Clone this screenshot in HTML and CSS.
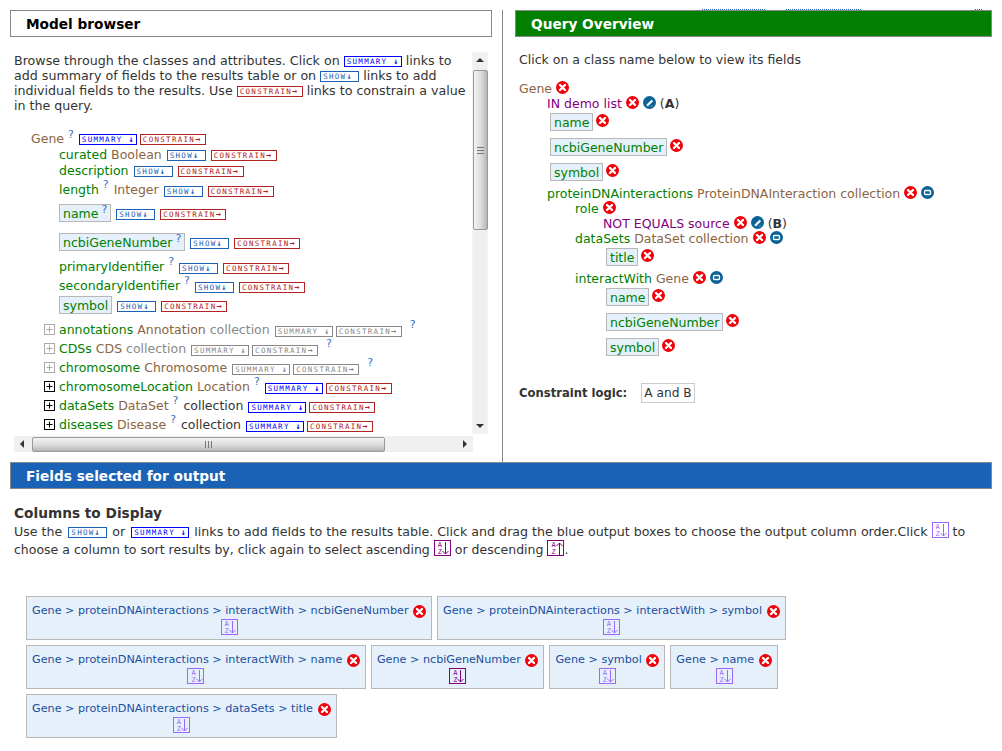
FILE: index.html
```html
<!DOCTYPE html>
<html lang="en-us">
<head>
    <meta charset="utf-8">
    <meta name="viewport" content="width=device-width">
    <title>Query builder</title>
    <link rel="stylesheet" href="styles.css">
</head>
<body>
    <svg class="sprite" width="0" height="0">
        <symbol id="i-x" viewBox="0 0 13 13">
            <circle cx="6.5" cy="6.5" r="6.5" fill="#f00008"/>
            <path d="M4 4l5 5M9 4l-5 5" stroke="#fff" stroke-width="2.4" stroke-linecap="round"/>
        </symbol>
        <symbol id="i-edit" viewBox="0 0 13 13">
            <circle cx="6.5" cy="6.5" r="6.5" fill="#0b6297"/>
            <path d="M4 8.6l4.6-4.6 1.2 1.2-4.6 4.6H4zM7.5 10h1M9.5 10h.6" fill="#fff" stroke="#fff" stroke-width=".6"/>
        </symbol>
        <symbol id="i-min" viewBox="0 0 13 13">
            <circle cx="6.5" cy="6.5" r="6.5" fill="#0b6297"/>
            <rect x="3.5" y="4.5" width="6" height="4" rx="1" fill="none" stroke="#fff" stroke-width="1.3"/>
        </symbol>
        <symbol id="i-plus" viewBox="0 0 11 11">
            <rect x=".5" y=".5" width="10" height="10" fill="#fff" stroke="currentColor"/>
            <path d="M2.5 5.5h6M5.500 2.500v6" stroke="currentColor"/>
        </symbol>
        <symbol id="i-down" viewBox="0 0 7 13">
            <path d="M3.500 0v12M.5 9l3 3 3-3" fill="none" stroke="currentColor"/>
        </symbol>
        <symbol id="i-up" viewBox="0 0 7 13">
            <path d="M3.500 1v12M.5 4l3-3 3 3" fill="none" stroke="currentColor"/>
        </symbol>
    </svg>

    <div class="top-links">
        <span class="top-link link-a"></span>
        <span class="top-link link-b"></span>
        <span class="top-link link-c"></span>
    </div>

    <div class="columns">
        <div class="col-left">
            <h2 class="heading">Model browser</h2>
            <div class="browser">
                <div class="browser-top">
                    <div class="tree-scroll">
                        <p class="intro">Browse through the classes and attributes. Click on <a class="tag summary">SUMMARY <i>↓</i></a> links to<br>add summary of fields to the results table or on <a class="tag show">SHOW<i>↓</i></a> links to add<br>individual fields to the results. Use <a class="tag constrain">CONSTRAIN<i>→</i></a> links to constrain a value<br>in the query.</p>
                        <div class="tree">
                            <div class="row root short"><span class="label"><span class="cls">Gene</span></span><sup class="help">?</sup><a class="tag summary first">SUMMARY <i>↓</i></a><a class="tag constrain near">CONSTRAIN<i>→</i></a></div>

                            <div class="row attr short"><span class="label"><span class="fld">curated</span> <span class="cls">Boolean</span></span><a class="tag show first">SHOW<i>↓</i></a><a class="tag constrain">CONSTRAIN<i>→</i></a></div>
                            <div class="row attr short"><span class="label"><span class="fld">description</span></span><a class="tag show first">SHOW<i>↓</i></a><a class="tag constrain">CONSTRAIN<i>→</i></a></div>
                            <div class="row attr tall length"><span class="label"><span class="fld">length</span></span><sup class="help">?</sup><span class="cls after-help">Integer</span><a class="tag show first">SHOW<i>↓</i></a><a class="tag constrain">CONSTRAIN<i>→</i></a></div>
                            <div class="row attr boxed"><span class="box"><span class="fld">name</span><sup class="help">?</sup></span><a class="tag show first">SHOW<i>↓</i></a><a class="tag constrain">CONSTRAIN<i>→</i></a></div>
                            <div class="row attr boxed"><span class="box"><span class="fld">ncbiGeneNumber</span><sup class="help">?</sup></span><a class="tag show first">SHOW<i>↓</i></a><a class="tag constrain">CONSTRAIN<i>→</i></a></div>
                            <div class="row attr tall"><span class="label"><span class="fld">primaryIdentifier</span></span><sup class="help">?</sup><a class="tag show first">SHOW<i>↓</i></a><a class="tag constrain">CONSTRAIN<i>→</i></a></div>
                            <div class="row attr tall"><span class="label"><span class="fld">secondaryIdentifier</span></span><sup class="help">?</sup><a class="tag show first">SHOW<i>↓</i></a><a class="tag constrain">CONSTRAIN<i>→</i></a></div>
                            <div class="row attr boxed tight"><span class="box"><span class="fld">symbol</span></span><a class="tag show first">SHOW<i>↓</i></a><a class="tag constrain">CONSTRAIN<i>→</i></a></div>

                            <div class="row ref tall off"><svg class="plus"><use href="#i-plus"/></svg><span class="label"><span class="fld">annotations</span> <span class="cls">Annotation</span> <span class="coll">collection</span></span><a class="tag first">SUMMARY <i>↓</i></a><a class="tag wide near">CONSTRAIN<i>→</i></a><sup class="help late">?</sup></div>
                            <div class="row ref tall off"><svg class="plus"><use href="#i-plus"/></svg><span class="label"><span class="fld">CDSs</span> <span class="cls">CDS</span> <span class="coll">collection</span></span><a class="tag first">SUMMARY <i>↓</i></a><a class="tag wide near">CONSTRAIN<i>→</i></a><sup class="help late">?</sup></div>
                            <div class="row ref tall off"><svg class="plus"><use href="#i-plus"/></svg><span class="label"><span class="fld">chromosome</span> <span class="cls">Chromosome</span></span><a class="tag first">SUMMARY <i>↓</i></a><a class="tag wide near">CONSTRAIN<i>→</i></a><sup class="help late">?</sup></div>
                            <div class="row ref tall"><svg class="plus"><use href="#i-plus"/></svg><span class="label"><span class="fld">chromosomeLocation</span> <span class="cls">Location</span></span><sup class="help">?</sup><a class="tag summary first">SUMMARY <i>↓</i></a><a class="tag constrain near">CONSTRAIN<i>→</i></a></div>
                            <div class="row ref tall"><svg class="plus"><use href="#i-plus"/></svg><span class="label"><span class="fld">dataSets</span> <span class="cls">DataSet</span></span><sup class="help">?</sup><span class="after-help">collection</span><a class="tag summary first">SUMMARY <i>↓</i></a><a class="tag constrain near">CONSTRAIN<i>→</i></a></div>
                            <div class="row ref tall"><svg class="plus"><use href="#i-plus"/></svg><span class="label"><span class="fld">diseases</span> <span class="cls">Disease</span></span><sup class="help">?</sup><span class="after-help">collection</span><a class="tag summary first">SUMMARY <i>↓</i></a><a class="tag constrain near">CONSTRAIN<i>→</i></a></div>
                            <div class="row ref tall clipped"><svg class="plus"><use href="#i-plus"/></svg><span class="label"><span class="fld">diseaseAssociations</span> <span class="cls">Association</span></span><span class="after-help">collection</span></div>
                        </div>
                    </div>
                    <div class="vbar">
                        <span class="arrow-up"></span>
                        <div class="vthumb"><span class="grip-h"></span></div>
                        <span class="vspace"></span>
                        <span class="arrow-down"></span>
                    </div>
                </div>
                <div class="hbar">
                    <span class="arrow-left"></span>
                    <div class="hthumb"><span class="grip-v"></span></div>
                    <span class="hspace"></span>
                    <span class="arrow-right"></span>
                </div>
            </div>
        </div>

        <div class="col-right">
            <h2 class="heading green">Query Overview</h2>
            <p class="overview-intro">Click on a class name below to view its fields</p>
            <div class="qrow"><span class="cls">Gene</span><svg class="ico"><use href="#i-x"/></svg></div>
            <div class="qrow in1"><span class="cons">IN demo list</span><svg class="ico"><use href="#i-x"/></svg><svg class="ico"><use href="#i-edit"/></svg><span class="code">(<b>A</b>)</span></div>
            <div class="frow in1b"><span class="fbox">name</span><svg class="ico"><use href="#i-x"/></svg></div>
            <div class="frow in1b"><span class="fbox">ncbiGeneNumber</span><svg class="ico"><use href="#i-x"/></svg></div>
            <div class="frow in1b"><span class="fbox">symbol</span><svg class="ico"><use href="#i-x"/></svg></div>
            <div class="qrow in1"><span class="fld">proteinDNAinteractions</span>&nbsp;<span class="cls">ProteinDNAInteraction collection</span><svg class="ico"><use href="#i-x"/></svg><svg class="ico"><use href="#i-min"/></svg></div>
            <div class="qrow in2"><span class="fld">role</span><svg class="ico"><use href="#i-x"/></svg></div>
            <div class="qrow in3"><span class="cons">NOT EQUALS source</span><svg class="ico"><use href="#i-x"/></svg><svg class="ico"><use href="#i-edit"/></svg><span class="code">(<b>B</b>)</span></div>
            <div class="qrow in2"><span class="fld">dataSets</span>&nbsp;<span class="cls">DataSet collection</span><svg class="ico"><use href="#i-x"/></svg><svg class="ico"><use href="#i-min"/></svg></div>
            <div class="frow in2b"><span class="fbox">title</span><svg class="ico"><use href="#i-x"/></svg></div>
            <div class="qrow in2"><span class="fld">interactWith</span>&nbsp;<span class="cls">Gene</span><svg class="ico"><use href="#i-x"/></svg><svg class="ico"><use href="#i-min"/></svg></div>
            <div class="frow in2b"><span class="fbox">name</span><svg class="ico"><use href="#i-x"/></svg></div>
            <div class="frow in2b"><span class="fbox">ncbiGeneNumber</span><svg class="ico"><use href="#i-x"/></svg></div>
            <div class="frow in2b"><span class="fbox">symbol</span><svg class="ico"><use href="#i-x"/></svg></div>
            <div class="logic"><b>Constraint logic:</b><span class="logic-box">A and B</span></div>
        </div>
    </div>

    <div class="fields">
        <h2 class="heading blue">Fields selected for output</h2>
        <h3 class="columns-title">Columns to Display</h3>
        <p class="columns-help"><span class="help-first">Use the <a class="tag show">SHOW<i>↓</i></a> or <a class="tag summary">SUMMARY <i>↓</i></a> links to add fields to the results table. Click and drag the blue output boxes to choose the output column order.Click <span class="sort light"><span class="az">A<br>Z</span><svg class="sort-arrow"><use href="#i-down"/></svg></span> to</span><br>choose a column to sort results by, click again to select ascending <span class="sort dark"><span class="az">A<br>Z</span><svg class="sort-arrow"><use href="#i-down"/></svg></span> or descending <span class="sort dark"><span class="az">A<br>Z</span><svg class="sort-arrow"><use href="#i-up"/></svg></span>.</p>
        <div class="output-list">
            <div class="output">
                <div class="path">Gene &gt; proteinDNAinteractions &gt; interactWith &gt; ncbiGeneNumber <svg class="ico"><use href="#i-x"/></svg></div>
                <span class="sort light"><span class="az">A<br>Z</span><svg class="sort-arrow"><use href="#i-down"/></svg></span>
            </div>
            <div class="output">
                <div class="path">Gene &gt; proteinDNAinteractions &gt; interactWith &gt; symbol <svg class="ico"><use href="#i-x"/></svg></div>
                <span class="sort light"><span class="az">A<br>Z</span><svg class="sort-arrow"><use href="#i-down"/></svg></span>
            </div>
            <div class="output">
                <div class="path">Gene &gt; proteinDNAinteractions &gt; interactWith &gt; name <svg class="ico"><use href="#i-x"/></svg></div>
                <span class="sort light"><span class="az">A<br>Z</span><svg class="sort-arrow"><use href="#i-down"/></svg></span>
            </div>
            <div class="output">
                <div class="path">Gene &gt; ncbiGeneNumber <svg class="ico"><use href="#i-x"/></svg></div>
                <span class="sort dark"><span class="az">A<br>Z</span><svg class="sort-arrow"><use href="#i-down"/></svg></span>
            </div>
            <div class="output">
                <div class="path">Gene &gt; symbol <svg class="ico"><use href="#i-x"/></svg></div>
                <span class="sort light"><span class="az">A<br>Z</span><svg class="sort-arrow"><use href="#i-down"/></svg></span>
            </div>
            <div class="output">
                <div class="path">Gene &gt; name <svg class="ico"><use href="#i-x"/></svg></div>
                <span class="sort light"><span class="az">A<br>Z</span><svg class="sort-arrow"><use href="#i-down"/></svg></span>
            </div>
            <div class="output">
                <div class="path">Gene &gt; proteinDNAinteractions &gt; dataSets &gt; title <svg class="ico"><use href="#i-x"/></svg></div>
                <span class="sort light"><span class="az">A<br>Z</span><svg class="sort-arrow"><use href="#i-down"/></svg></span>
            </div>
        </div>
    </div>
</body>
</html>
```

FILE: styles.css
```css
* {
    box-sizing: border-box;
}

body {
    margin: 0;
    position: relative;
    height: 751px;
    overflow: hidden;
    background: #fff;
    color: #333;
    font-family: "DejaVu Sans", Verdana, sans-serif;
    font-size: 12.5px;
    line-height: 15px;
}

.sprite {
    position: absolute;
}

/* bits of the nav links poking out above the green bar */
.top-links .top-link {
    position: absolute;
    top: 9px;
    height: 1px;
    border-top: 1px dotted #1a62b5;
}

.link-a { left: 702px; width: 63px; }
.link-b { left: 786px; width: 75px; }
.link-c { left: 975px; width: 7px; }

/* top two columns */
.columns {
    display: flex;
    height: 462px;
    padding-top: 10px;
}

.col-left {
    width: 503px;
    padding: 0 10px;
    border-right: 1px solid #888;
}

.col-right {
    width: 489px;
    padding-left: 12px;
}

.heading {
    height: 27px;
    margin: 0;
    padding-left: 15px;
    border: 1px solid #888;
    font-size: 13.7px;
    line-height: 26px;
    font-weight: bold;
    color: #000;
}

.heading.green {
    background: #007f00;
    color: #fff;
}

.heading.blue {
    background: #1a62b5;
    color: #fff;
}

/* model browser */
.browser {
    margin: 15px 0 0 4px;
    width: 476px;
}

.browser-top {
    display: flex;
}

.tree-scroll {
    width: 460px;
    height: 382px;
    overflow: hidden;
}

.intro {
    margin: 0;
    padding-top: 1px;
    font-size: 12.65px;
    white-space: nowrap;
}

.tree {
    margin-top: 17px;
}

.row {
    display: flex;
    align-items: center;
    white-space: nowrap;
}

.root { padding-left: 17px; }
.attr { padding-left: 45px; }
.ref { padding-left: 30px; }

.short { height: 16px; }
.tall { height: 19px; }
.length { margin-top: 2px; }

.boxed {
    height: 29px;
    padding-top: 5px;
    padding-bottom: 6px;
}

.boxed.tight {
    height: 25px;
    padding-top: 1px;
    padding-bottom: 6px;
}

.clipped {
    margin-top: -4px;
}

.plus {
    width: 11px;
    height: 11px;
    margin-right: 4px;
    color: #000;
    flex: none;
}

.off .plus {
    color: #aaa;
}

.off .coll {
    color: #888;
}

.fld { color: #008000; }
.cls { color: #8b6442; }
.cons { color: #800080; }

.help {
    align-self: flex-start;
    margin: -1px 0 0 4px;
    font-size: 11px;
    line-height: 11px;
    color: #3a72c4;
    vertical-align: baseline;
}

.box .help {
    margin-left: 3px;
}

.help.late {
    margin-left: 8px;
}

.after-help {
    margin-left: 5px;
}

.box {
    display: flex;
    align-items: center;
    height: 18px;
    padding: 0 3px;
    background: #e6f0fa;
    border: 1px solid #b8b8b8;
}

/* small SUMMARY / SHOW / CONSTRAIN links */
.tag {
    display: inline-block;
    width: 58px;
    height: 11px;
    padding-left: 2px;
    border: 1px solid #888;
    color: #888;
    font-family: "DejaVu Sans Mono", monospace;
    font-size: 7.5px;
    line-height: 9px;
    letter-spacing: 1.3px;
    white-space: nowrap;
    flex: none;
}

.tag i {
    font-style: normal;
    font-weight: bold;
    font-size: 8.5px;
    letter-spacing: 0;
}

.row .tag {
    margin-top: 3px;
    margin-left: 5px;
}

.row .tag.near {
    margin-left: 3px;
}

.tag.wide,
.tag.constrain {
    width: 66px;
}

.tag.summary {
    border-color: #00f;
    color: #00f;
}

.tag.show {
    width: 39px;
    border-color: #1a62b5;
    color: #1a62b5;
}

.tag.constrain {
    border-color: #b22222;
    color: #b22222;
}

.intro .tag,
.columns-help .tag {
    vertical-align: 1px;
}

.columns-help .tag {
    margin: 0 1px 0 2px;
}

/* fake scrollbars, the browser's own can't be photographed here */
.vbar {
    display: flex;
    flex-direction: column;
    align-items: center;
    width: 16px;
    height: 382px;
    margin-left: -2px;
    background: #f0f0f0;
    border: 1px solid #f4f4f4;
}

.vthumb {
    display: flex;
    align-items: center;
    justify-content: center;
    width: 15px;
    height: 160px;
    margin-top: 8px;
    background: linear-gradient(to right, #f4f4f4, #d8d8d8 60%, #b4b4b4);
    border: 1px solid #999;
    border-radius: 2px;
}

.vspace, .hspace {
    flex: 1;
}

.grip-h {
    width: 7px;
    height: 7px;
    border-top: 1px solid #777;
    border-bottom: 1px solid #777;
    background: linear-gradient(#777, #777) center / 7px 1px no-repeat;
}

.grip-v {
    width: 7px;
    height: 7px;
    border-left: 1px solid #777;
    border-right: 1px solid #777;
    background: linear-gradient(#777, #777) center / 1px 7px no-repeat;
}

.arrow-up, .arrow-down, .arrow-left, .arrow-right {
    width: 0;
    height: 0;
    flex: none;
    border: 4px solid transparent;
}

.arrow-up {
    margin-top: 5px;
    border-top-width: 0;
    border-bottom-color: #333;
}

.arrow-down {
    margin-bottom: 5px;
    border-bottom-width: 0;
    border-top-color: #333;
}

.arrow-left {
    margin-left: 6px;
    border-left-width: 0;
    border-right-color: #333;
}

.arrow-right {
    margin-right: 6px;
    border-right-width: 0;
    border-left-color: #333;
}

.hbar {
    display: flex;
    align-items: center;
    width: 459px;
    height: 16px;
    margin-top: 2px;
    background: #f0f0f0;
}

.hthumb {
    display: flex;
    align-items: center;
    justify-content: center;
    width: 353px;
    height: 15px;
    margin-left: 8px;
    background: linear-gradient(#f4f4f4, #d8d8d8 60%, #b4b4b4);
    border: 1px solid #999;
    border-radius: 2px;
}

/* query overview */
.overview-intro {
    margin: 15px 0 14px 4px;
}

.qrow, .frow {
    display: flex;
    align-items: center;
    white-space: nowrap;
    padding-left: 4px;
}

.qrow {
    height: 15px;
}

.frow {
    height: 25px;
    padding-top: 2px;
    padding-bottom: 5px;
}

.qrow.in1 { padding-left: 32px; }
.qrow.in2 { padding-left: 60px; }
.qrow.in3 { padding-left: 88px; }
.frow.in1b { padding-left: 35px; }
.frow.in2b { padding-left: 91px; }

.ico {
    width: 13px;
    height: 13px;
    margin-left: 4px;
    position: relative;
    top: -1px;
    flex: none;
}

.frow .ico {
    margin-left: 3px;
    top: -2px;
}

.code {
    margin-left: 4px;
}

.fbox {
    height: 18px;
    padding: 0 3px;
    line-height: 17px;
    background: #e6f0fa;
    border: 1px solid #b8b8b8;
    color: #008000;
}

.logic {
    display: flex;
    align-items: center;
    margin: 22px 0 0 4px;
    font-size: 11.6px;
}

.logic-box {
    margin-left: 14px;
    padding: 0 2px;
    height: 20px;
    font-size: 12.2px;
    line-height: 18px;
    border: 1px solid #ccc;
}

/* fields for output */
.fields {
    padding: 0 10px;
}

.columns-title {
    margin: 15px 0 0 4px;
    font-size: 13.7px;
    line-height: 18px;
    color: #333;
}

.columns-help {
    margin: 1px 0 0 4px;
    line-height: 18px;
    white-space: nowrap;
}

.help-first {
    font-size: 12.63px;
}

/* A-Z sort button, drawn box with two letters and an arrow */
.sort {
    display: inline-flex;
    justify-content: space-between;
    width: 17px;
    height: 16px;
    padding: 1px 2px 0 3px;
    border: 1px solid currentColor;
    font-family: "DejaVu Sans Mono", monospace;
    font-size: 7px;
    line-height: 6.5px;
    text-align: left;
}

.columns-help .sort {
    margin: -9px 0 -4px;
    vertical-align: 7px;
}

.output .sort {
    display: flex;
    margin: 0 auto;
}

.az {
    display: block;
}

.sort-arrow {
    width: 7px;
    height: 13px;
    flex: none;
}

.light { color: #9a66ff; }
.dark { color: #800080; }

.output-list {
    display: flex;
    flex-wrap: wrap;
    gap: 5px;
    margin: 37px 0 0 16px;
    width: 770px;
}

.output {
    padding: 4px 5px;
    height: 44px;
    background: #e6f0fa;
    border: 1px solid #b8b8b8;
    color: #1a4fa0;
    font-size: 11.2px;
    text-align: center;
}

.path {
    height: 18px;
    white-space: nowrap;
}

.path .ico {
    margin-left: 1px;
    top: 4px;
}
```
